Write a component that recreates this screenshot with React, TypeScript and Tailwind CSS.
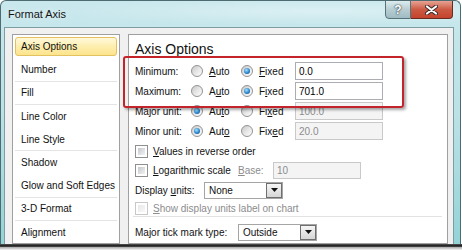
import React from "react";

const U = ({ children }: { children: React.ReactNode }) => <span className="underline underline-offset-[1px]">{children}</span>;

const Radio = ({ checked }: { checked?: boolean }) => (
  <span className="relative inline-block w-[12px] h-[12px] shrink-0 rounded-full border border-[#939393] bg-linear-to-br from-[#c8c8c8] via-[#e6e6e6] to-[#ffffff]">
    {checked && (
      <span className="absolute left-[2px] top-[2px] w-[6px] h-[6px] rounded-full bg-[radial-gradient(circle_at_40%_35%,#a9e2ff,#2a86cf_55%,#0d3f78)]" />
    )}
  </span>
);

const Check = ({ disabled }: { disabled?: boolean }) => (
  <span
    className={
      "inline-block w-[13px] h-[13px] shrink-0 border p-[2px] bg-white " +
      (disabled ? "border-[#c8c8c8]" : "border-[#8e8f8f]")
    }
  >
    <span
      className={
        "block w-full h-full bg-linear-to-br " +
        (disabled ? "from-[#e8e8e8] to-[#f8f8f8]" : "from-[#c4c8cd] to-[#f2f2f2]")
      }
    />
  </span>
);

const TextBox = ({ value, disabled, w = 88, h = 18 }: { value: string; disabled?: boolean; w?: number; h?: number }) => (
  <div
    className={
      "flex items-center pl-[3px] border " +
      (disabled ? "border-[#c9c9c9] bg-[#f4f4f4] text-[#8c8c8c]" : "border-[#abadb3] bg-white text-black")
    }
    style={{ width: w, height: h }}
  >
    {value}
  </div>
);

const Dropdown = ({ value }: { value: string }) => (
  <div className="w-[79px] h-[17px] border border-[#a5a5a5] bg-white flex items-center">
    <span className="flex-1 pl-[4px]">{value}</span>
    <span className="w-[16px] h-[15px] border border-[#6f6f6f] bg-linear-to-b from-[#f6f6f6] to-[#d6d6d6] flex items-center justify-center">
      <svg width="7" height="4" viewBox="0 0 7 4">
        <path d="M0 0 H7 L3.5 4 Z" fill="#111" />
      </svg>
    </span>
  </div>
);

const UnitRow = ({
  label,
  auto,
  fixed,
  fixedChecked,
  value,
}: {
  label: string;
  auto: React.ReactNode;
  fixed: React.ReactNode;
  fixedChecked: boolean;
  value: string;
}) => (
  <div className="flex items-center h-[21px]">
    <span className="w-[56px]">{label}</span>
    <span className="w-[50px] flex items-center gap-[6px]">
      <Radio checked={!fixedChecked} />
      <span>{auto}</span>
    </span>
    <span className="w-[54px] flex items-center gap-[6px]">
      <Radio checked={fixedChecked} />
      <span>{fixed}</span>
    </span>
    <TextBox value={value} disabled={!fixedChecked} />
  </div>
);

const items: { name: string; sep: boolean; active?: boolean }[] = [
  { name: "Axis Options", sep: false, active: true },
  { name: "Number", sep: true },
  { name: "Fill", sep: true },
  { name: "Line Color", sep: false },
  { name: "Line Style", sep: true },
  { name: "Shadow", sep: false },
  { name: "Glow and Soft Edges", sep: true },
  { name: "3-D Format", sep: true },
  { name: "Alignment", sep: false },
];

export default function App() {
  return (
    <div className="w-[462px] h-[250px] bg-white relative overflow-hidden font-['Liberation_Sans',Arial,sans-serif] text-[10px] text-[#111]">
      <div className="h-[244px] w-[461px] flex flex-col bg-linear-to-b from-[#c9e8ed] via-[#b8e1e6] to-[#93d3d6] border-l border-t border-r border-[#4d6b70] rounded-tl-[6px] rounded-tr-[6px] overflow-hidden">
        {/* title bar */}
        <div className="h-[26px] flex justify-between shrink-0 bg-[radial-gradient(ellipse_at_70%_40%,rgba(255,255,255,0.35),transparent_60%)]">
          <span className="pl-[7px] self-center text-[11px] text-[#141414] [text-shadow:0_0_6px_rgba(255,255,255,0.9)]">
            Format Axis
          </span>
          <div className="flex mr-[7px] -mt-[1px] h-[19px]">
            <div className="w-[26px] h-full border border-[#56727a] rounded-bl-[4px] bg-linear-to-b from-[#dcecef] via-[#b7cdd2] to-[#9fbcc3] flex items-center justify-center">
              <span className="text-white font-bold text-[12px] leading-none [text-shadow:0_0_2px_#2a3a40,0_0_1px_#2a3a40]">?</span>
            </div>
            <div className="w-[42px] h-full border border-l-0 border-[#6b2a20] rounded-br-[4px] bg-linear-to-b from-[#e6a394] via-[#cc5a43] to-[#c4432c] flex items-center justify-center">
              <svg width="13" height="10" viewBox="0 0 13 10">
                <path d="M2 1.5 L11 8.5 M11 1.5 L2 8.5" stroke="#3b2a28" strokeWidth="4" strokeLinecap="round" />
                <path d="M2 1.5 L11 8.5 M11 1.5 L2 8.5" stroke="#ffffff" strokeWidth="2.2" strokeLinecap="round" />
              </svg>
            </div>
          </div>
        </div>
        {/* body */}
        <div className="flex-1 ml-[3px] mr-[6px] bg-[#f0f0f0] border-t border-l border-r border-[#7f9ca2] flex pt-[6px] pl-[7px] pr-[5px] gap-[8px] min-h-0">
          {/* left list */}
          <div className="w-[108px] shrink-0 border border-[#a0a0a0] bg-white px-[2px] overflow-hidden">
            {items.map((it) => (
              <div
                key={it.name}
                className={"h-[23.25px] py-[2px] " + (it.sep ? "border-b border-[#e4e4e4]" : "")}
              >
                <div
                  className={
                    "h-full flex items-center pl-[5px] rounded-[3px] border " +
                    (it.active
                      ? "border-[#e3c160] bg-linear-to-b from-[#fff9dc] via-[#fdeeae] to-[#fde48c]"
                      : "border-transparent")
                  }
                >
                  {it.name}
                </div>
              </div>
            ))}
          </div>
          {/* right panel */}
          <div className="flex-1 border border-[#a0a0a0] bg-white pl-[6px] flex flex-col overflow-hidden">
            <div className="h-[26px] pt-[3px] leading-[22px] text-[14px] text-[#111] shrink-0">Axis Options</div>
            <UnitRow label="Minimum:" auto={<><U>A</U>uto</>} fixed={<><U>F</U>ixed</>} fixedChecked value="0.0" />
            <UnitRow label="Maximum:" auto={<>A<U>u</U>to</>} fixed={<>F<U>i</U>xed</>} fixedChecked value="701.0" />
            <UnitRow label="Major unit:" auto={<>Au<U>t</U>o</>} fixed={<>Fi<U>x</U>ed</>} fixedChecked={false} value="100.0" />
            <UnitRow label="Minor unit:" auto={<>Aut<U>o</U></>} fixed={<>Fix<U>e</U>d</>} fixedChecked={false} value="20.0" />
            <div className="flex items-center h-[20px] gap-[5px]">
              <Check />
              <span><U>V</U>alues in reverse order</span>
            </div>
            <div className="flex items-center h-[20px]">
              <span className="w-[103px] flex items-center gap-[5px]">
                <Check />
                <span><U>L</U>ogarithmic scale</span>
              </span>
              <span className="w-[35px] text-[#8c8c8c]"><U>B</U>ase:</span>
              <TextBox value="10" disabled h={17} />
            </div>
            <div className="flex items-center h-[22px]">
              <span className="w-[69px]">Display <U>u</U>nits:</span>
              <Dropdown value="None" />
            </div>
            <div className="flex items-center h-[15px] gap-[5px] text-[#8c8c8c]">
              <Check disabled />
              <span><U>S</U>how display units label on chart</span>
            </div>
            <div className="h-px bg-[#e2e2e2] -ml-[2px] mr-[5px] shrink-0" />
            <div className="flex items-center h-[22px] mt-[4px] shrink-0">
              <span className="w-[103px]">Major tick mark type:</span>
              <Dropdown value="Outside" />
            </div>
          </div>
        </div>
      </div>
      <div className="h-[3px] w-full bg-linear-to-b from-[#5a5a5a] via-[#262626] to-[#4a4a4a]" />
      <div className="h-[3px] w-full bg-linear-to-b from-[#a8a8a8] to-[#f4f4f4]" />
      {/* red highlight box */}
      <div className="absolute left-[123px] top-[56px] w-[281px] h-[52px] border-2 border-[#c3232b] rounded-[3px] shadow-[2px_2px_3px_rgba(0,0,0,0.35)]" />
    </div>
  );
}
